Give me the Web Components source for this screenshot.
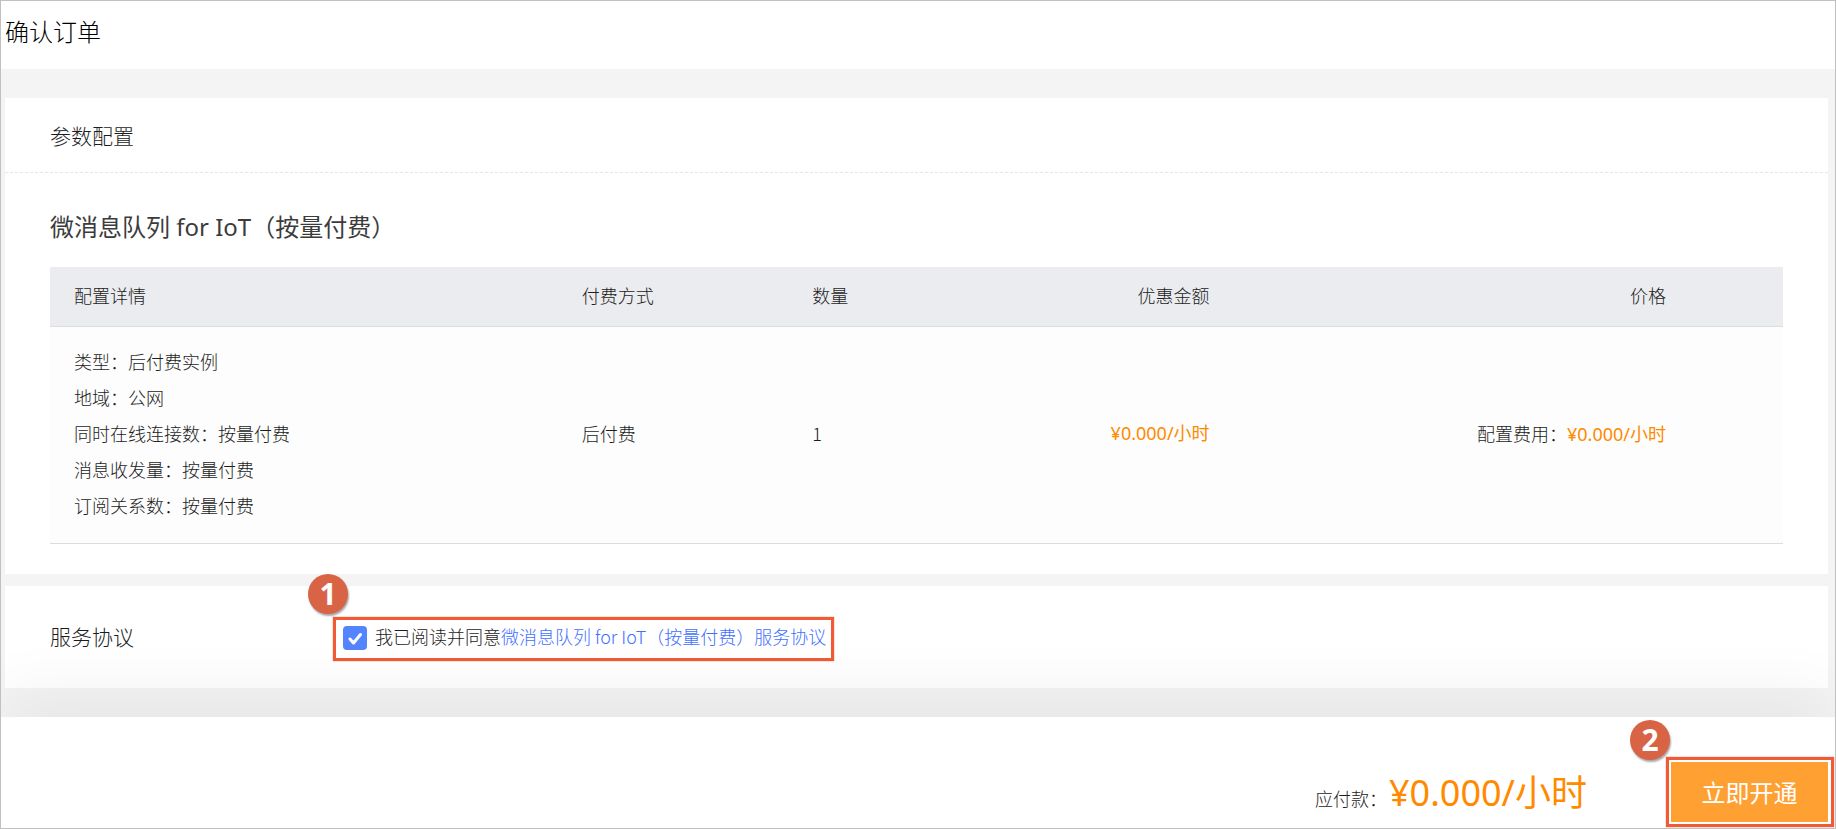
<!DOCTYPE html>
<html lang="zh-CN">
<head>
<meta charset="utf-8">
<title>确认订单</title>
<style>
  html { height: 100%; }
  body {
    --latin: "Noto Sans", "Noto Sans CJK SC", sans-serif;
    margin: 0;
    min-height: 100%;
    display: flex;
    font-family: "Noto Sans CJK SC", sans-serif;
    font-weight: 300;
    font-size: 18px;
    line-height: 36px;
    color: #1c1c1c;
  }
</style>
</head>
<body>
<order-page>
  <page-header slot="header">确认订单</page-header>
  <content-card>
    <span slot="title">参数配置</span>
    <order-table product="微消息队列 for IoT（按量付费）"></order-table>
  </content-card>
  <agreement-card></agreement-card>
  <pay-bar slot="footer"></pay-bar>
</order-page>

<script>
class BaseElement extends HTMLElement {
  constructor() {
    super();
    const root = this.attachShadow({ mode: 'open' });
    const tpl = document.createElement('template');
    tpl.innerHTML = `<style>*{box-sizing:border-box}</style>` + this.render();
    root.appendChild(tpl.content.cloneNode(true));
  }
}

customElements.define('order-page', class extends BaseElement {
  render() {
    return `
    <style>
      :host { flex: 1; display: flex; flex-direction: column; box-sizing: border-box;
        border: 1px solid #c0c0c0; background: #f4f4f4; overflow: hidden; }
      main { flex: 1; display: flex; flex-direction: column; gap: 12px; padding: 29px 7px 29px 4px; }
    </style>
    <slot name="header"></slot>
    <main><slot></slot></main>
    <slot name="footer"></slot>`;
  }
});

customElements.define('page-header', class extends BaseElement {
  render() {
    return `
    <style>
      :host { display: block; background: #fff; color: #000; padding: 12px 4px 20px; }
      h1 { margin: 0; font-size: 24px; font-weight: inherit; line-height: 36px; }
    </style>
    <h1><slot></slot></h1>`;
  }
});

customElements.define('content-card', class extends BaseElement {
  render() {
    return `
    <style>
      :host { display: block; background: #fff; }
      h2 { margin: 0; padding: 19px 45px; font-size: 21px; font-weight: inherit; line-height: 36px;
        border-bottom: 1px dashed #e6e6e6; }
      div { padding: 36px 45px 30px; }
    </style>
    <h2><slot name="title"></slot></h2>
    <div><slot></slot></div>`;
  }
});

customElements.define('order-table', class extends BaseElement {
  render() {
    return `
    <style>
      :host { display: block; }
      h3 { margin: 0 0 22px; font-family: var(--latin); font-size: 24px; font-weight: 400; line-height: 36px; color: #3c3c3c; }
      table { width: 100%; table-layout: fixed; border-collapse: separate; border-spacing: 0; }
      th, td { padding: 0 24px; text-align: left; font-weight: inherit; border-bottom: 1px solid #dcdde0; }
      th { height: 60px; padding-bottom: 4px; background: #ebecf0; }
      td { background: #fdfdfd; padding-top: 16px; padding-bottom: 20px; }
      .num { text-align: right; }
      .last { padding-right: 117px; }
      .price { color: #ff8a00; font-family: var(--latin); font-weight: 400; }
      ul { list-style: none; margin: 0; padding: 0; }
      .c1 { width: 29.3%; } .c2 { width: 13.3%; } .c3 { width: 11.4%; } .c4 { width: 14.3%; }
    </style>
    <h3></h3>
    <table>
      <colgroup><col class="c1"><col class="c2"><col class="c3"><col class="c4"><col></colgroup>
      <thead><tr><th>配置详情</th><th>付费方式</th><th>数量</th><th class="num">优惠金额</th><th class="num last">价格</th></tr></thead>
      <tbody><tr>
        <td><ul><li>类型：后付费实例</li><li>地域：公网</li><li>同时在线连接数：按量付费</li><li>消息收发量：按量付费</li><li>订阅关系数：按量付费</li></ul></td>
        <td>后付费</td><td>1</td>
        <td class="num price">¥0.000/小时</td>
        <td class="num last">配置费用：<span class="price">¥0.000/小时</span></td>
      </tr></tbody>
    </table>`;
  }
  connectedCallback() {
    this.shadowRoot.querySelector('h3').textContent = this.getAttribute('product');
  }
});

// Numbered marker pinned to the top-left corner of the framed content.
customElements.define('step-frame', class extends BaseElement {
  render() {
    return `
    <style>
      :host { position: relative; display: flex; box-sizing: border-box;
        border: 3px solid #f05a35; box-shadow: 0 0 1px #f05a35; }
      b { position: absolute; width: 40px; height: 40px; border-radius: 50%; background: #d96445;
        color: #fff; font: bold 30px/40px "Noto Sans", sans-serif; text-align: center;
        left: var(--badge-x, -28px); top: var(--badge-y, -46px); box-shadow: 1px 2px 2px rgba(0,0,0,.35); }
    </style>
    <b></b><slot></slot>`;
  }
  connectedCallback() {
    this.shadowRoot.querySelector('b').textContent = this.getAttribute('step');
  }
});

customElements.define('agreement-card', class extends BaseElement {
  render() {
    return `
    <style>
      :host { display: flex; align-items: center; background: #fff; padding: 31px 45px 27px; }
      h2 { margin: 0; padding-bottom: 6px; width: 283px; font-size: 21px; font-weight: inherit; line-height: 36px; }
      .row { display: flex; align-items: center; padding: 0 5px 2px 7px; height: 38px; line-height: 36px; }
      input { appearance: none; width: 24px; height: 24px; margin: 0 8px 0 0; border-radius: 4px;
        background: #5584ff url('data:image/svg+xml,<svg xmlns="http://www.w3.org/2000/svg" viewBox="0 0 24 24"><path d="M7 13l3.500 4L17.500 8.500" fill="none" stroke="white" stroke-width="3" stroke-linecap="round" stroke-linejoin="round"/></svg>') center/24px no-repeat; }
      span { padding-bottom: 4px; }
      a { color: #3f70ff; text-decoration: none; }
    </style>
    <h2>服务协议</h2>
    <step-frame step="1"><div class="row">
      <input type="checkbox" id="agree" checked>
      <span><label for="agree">我已阅读并同意</label><a href="#agreement">微消息队列 for IoT（按量付费）服务协议</a></span>
    </div></step-frame>`;
  }
});

customElements.define('pay-bar', class extends BaseElement {
  render() {
    return `
    <style>
      :host { display: flex; justify-content: flex-end; align-items: flex-end; box-sizing: border-box;
        background: #fff; padding: 40px 1px 1px 0; position: relative;
        box-shadow: 0 -28px 60px rgba(0,0,0,.05); }
      p { margin: 0 79px 10px 0; display: flex; align-items: baseline; gap: 2px; }
      strong { font-family: var(--latin); font-size: 36px; line-height: 48px; font-weight: 400; color: #ff8a00; }
      step-frame { --badge-x: -39px; --badge-y: -40px; }
      button { border: 0; margin: 2px 3px 2px 2px; width: 157px; height: 60px; background: #ffa033; color: #fff;
        font: inherit; font-size: 24px; font-weight: 400; line-height: 36px; }
    </style>
    <p><span>应付款：</span><strong>¥0.000/小时</strong></p>
    <step-frame step="2"><button type="button">立即开通</button></step-frame>`;
  }
});
</script>
</body>
</html>
